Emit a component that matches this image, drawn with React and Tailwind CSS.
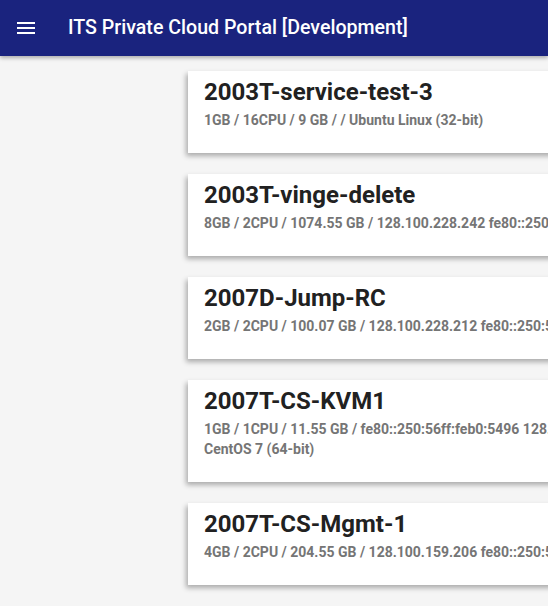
const machines = [
  { name: '2003T-service-test-3', lines: ['1GB / 16CPU / 9 GB / / Ubuntu Linux (32-bit)'] },
  { name: '2003T-vinge-delete', lines: ['8GB / 2CPU / 1074.55 GB / 128.100.228.242 fe80::250:56ff:feb0:1a2b'] },
  { name: '2007D-Jump-RC', lines: ['2GB / 2CPU / 100.07 GB / 128.100.228.212 fe80::250:56ff:feb0:7c11'] },
  { name: '2007T-CS-KVM1', lines: ['1GB / 1CPU / 11.55 GB / fe80::250:56ff:feb0:5496 128.100.228.80', 'CentOS 7 (64-bit)'] },
  { name: '2007T-CS-Mgmt-1', lines: ['4GB / 2CPU / 204.55 GB / 128.100.159.206 fe80::250:56ff:feb0:3e0d'] },
];

function MenuIcon() {
  return (
    <svg width="24" height="24" viewBox="0 0 24 24" fill="white">
      <path d="M3 18h18v-2H3v2zm0-5h18v-2H3v2zm0-7v2h18V6H3z" />
    </svg>
  );
}

export default function App() {
  return (
    <div className="h-[606px] w-[548px] overflow-hidden bg-[#f5f5f5] font-['Roboto',sans-serif]">
      <header className="relative z-10 flex h-14 items-center bg-[#1a237e] shadow-[0_2px_4px_rgba(0,0,0,0.3)]">
        <div className="ml-[14px] flex h-6 w-6 items-center">
          <MenuIcon />
        </div>
        <h1 className="ml-[30px] text-[19.6px] font-medium text-white">ITS Private Cloud Portal [Development]</h1>
      </header>
      <div className="flex flex-col gap-[21px] pl-[188px] pt-[15px]">
        {machines.map((m) => (
          <div
            key={m.name}
            className="w-[600px] shrink-0 bg-white px-4 pb-[23px] pt-[7px] shadow-[-2px_3px_5px_rgba(0,0,0,0.3)]"
          >
            <div className="whitespace-nowrap text-[24px] font-bold leading-7 text-[#212121]">{m.name}</div>
            <div className="mt-1">
              {m.lines.map((l) => (
                <div key={l} className="whitespace-nowrap text-[14px] font-bold leading-5 text-[#757575]">
                  {l}
                </div>
              ))}
            </div>
          </div>
        ))}
      </div>
    </div>
  );
}
